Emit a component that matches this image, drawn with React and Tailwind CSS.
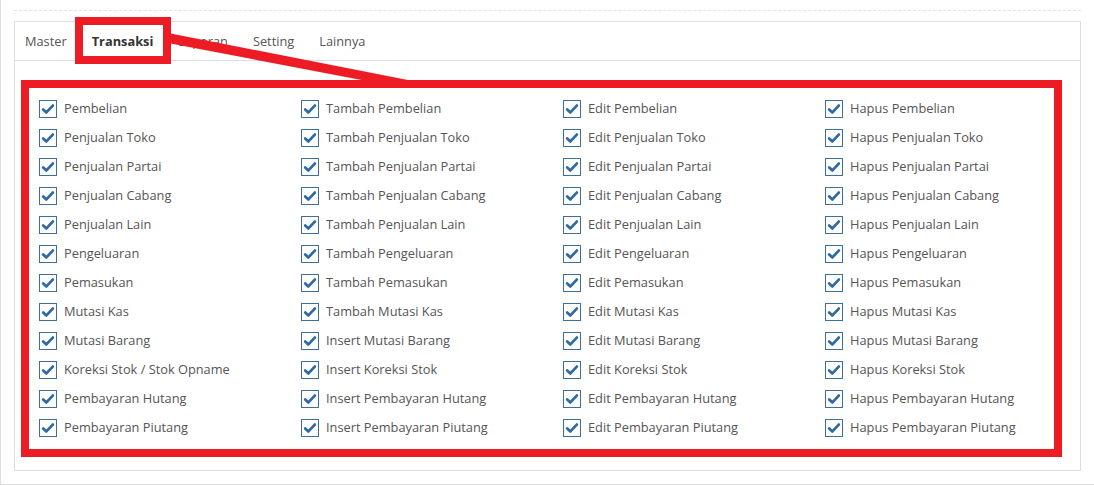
import React from "react";

const rows = [
  ["Pembelian", "Tambah Pembelian", "Edit Pembelian", "Hapus Pembelian"],
  ["Penjualan Toko", "Tambah Penjualan Toko", "Edit Penjualan Toko", "Hapus Penjualan Toko"],
  ["Penjualan Partai", "Tambah Penjualan Partai", "Edit Penjualan Partai", "Hapus Penjualan Partai"],
  ["Penjualan Cabang", "Tambah Penjualan Cabang", "Edit Penjualan Cabang", "Hapus Penjualan Cabang"],
  ["Penjualan Lain", "Tambah Penjualan Lain", "Edit Penjualan Lain", "Hapus Penjualan Lain"],
  ["Pengeluaran", "Tambah Pengeluaran", "Edit Pengeluaran", "Hapus Pengeluaran"],
  ["Pemasukan", "Tambah Pemasukan", "Edit Pemasukan", "Hapus Pemasukan"],
  ["Mutasi Kas", "Tambah Mutasi Kas", "Edit Mutasi Kas", "Hapus Mutasi Kas"],
  ["Mutasi Barang", "Insert Mutasi Barang", "Edit Mutasi Barang", "Hapus Mutasi Barang"],
  ["Koreksi Stok / Stok Opname", "Insert Koreksi Stok", "Edit Koreksi Stok", "Hapus Koreksi Stok"],
  ["Pembayaran Hutang", "Insert Pembayaran Hutang", "Edit Pembayaran Hutang", "Hapus Pembayaran Hutang"],
  ["Pembayaran Piutang", "Insert Pembayaran Piutang", "Edit Pembayaran Piutang", "Hapus Pembayaran Piutang"],
];

const tabs = ["Master", "Transaksi", "Laporan", "Setting", "Lainnya"];

const Check = () => (
  <span className="flex h-[18px] w-[18px] shrink-0 items-center justify-center border border-[#3d6f99] bg-white">
    <svg width="14" height="14" viewBox="0 0 14 14">
      <polyline
        points="2.2,7.4 5.4,10.4 11.8,3.6"
        fill="none"
        stroke="#2f6aa6"
        strokeWidth="2.8"
        strokeLinecap="round"
        strokeLinejoin="round"
      />
    </svg>
  </span>
);

const App = () => {
  return (
    <div className="relative h-[485px] w-[1094px] overflow-hidden bg-white font-['Open_Sans',sans-serif] text-[12.8px] text-[#555]">
      <div className="h-[485px] border-b border-l border-[#dedede] px-[13px] pt-[10px]">
        {/* dashed divider */}
        <div className="border-t border-dashed border-[#e2e2e2]" />

        <div className="mt-[10px] h-[450px] border border-[#dddddd]">
          {/* tabs */}
          <div className="flex h-[39px] items-center gap-[25px] border-b border-[#dddddd] pl-[10px] pt-[2px]">
            {tabs.map((t) => (
              <span
                key={t}
                className={t === "Transaksi" ? "font-bold text-[#333]" : ""}
              >
                {t}
              </span>
            ))}
          </div>

          {/* permissions */}
          <div className="pl-[24px] pt-[33px]">
            {rows.map((row, i) => (
              <div key={i} className="flex h-[29px] items-center">
                {row.map((label) => (
                  <label key={label} className="flex w-[262px] shrink-0 items-center gap-[7px]">
                    <Check />
                    <span className="whitespace-nowrap">{label}</span>
                  </label>
                ))}
              </div>
            ))}
          </div>
        </div>
      </div>

      {/* red annotation */}
      <div className="pointer-events-none absolute left-[75px] top-[17px] h-[47px] w-[96px] border-[8px] border-[#ed1c24]" />
      <div className="pointer-events-none absolute left-[21px] top-[80px] h-[377px] w-[1041px] border-[8px] border-[#ed1c24]" />
      <svg className="pointer-events-none absolute left-0 top-0" width="1094" height="485">
        <polygon points="168,33 418,82 372,82 168,43" fill="#ed1c24" />
      </svg>
    </div>
  );
};

export default App;
